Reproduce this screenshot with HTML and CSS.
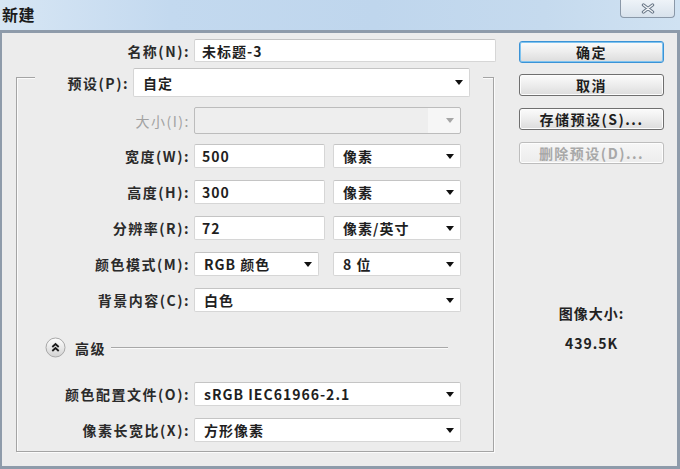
FILE: index.html
```html
<!DOCTYPE html>
<html lang="zh-CN">
<head>
<meta charset="utf-8">
<title>新建</title>
<link rel="stylesheet" href="styles.css">
</head>
<body>
<div class="window">
  <div class="titlebar">
    <span class="title">新建</span>
    <button class="close" aria-label="关闭">
      <svg width="14" height="11" viewBox="0 0 14 11">
        <path d="M2.5 2 L11.5 9 M11.5 2 L2.5 9" stroke="#6a7888" stroke-width="3.4" stroke-linecap="round"/>
        <path d="M2.5 2 L11.5 9 M11.5 2 L2.5 9" stroke="#f2f5f8" stroke-width="1.3" stroke-linecap="round"/>
      </svg>
    </button>
  </div>
  <div class="frame">
    <div class="form">
      <div class="row name-row">
        <label class="lbl lbl-out">名称(N):</label>
        <div class="field w-name">未标题-3</div>
      </div>

      <div class="group">
        <div class="row preset-row">
          <label class="lbl lbl-preset">预设(P):</label>
          <div class="field select w-preset"><span>自定</span><i class="arrow"></i></div>
        </div>

        <div class="row size-row">
          <label class="lbl lbl-in disabled">大小(I):</label>
          <div class="field select disabled-field w-full"><span></span><i class="arrow"></i></div>
        </div>

        <div class="row std-row first-std">
          <label class="lbl lbl-in">宽度(W):</label>
          <div class="field w-num">500</div>
          <div class="field select w-unit"><span>像素</span><i class="arrow"></i></div>
        </div>

        <div class="row std-row">
          <label class="lbl lbl-in">高度(H):</label>
          <div class="field w-num">300</div>
          <div class="field select w-unit"><span>像素</span><i class="arrow"></i></div>
        </div>

        <div class="row std-row">
          <label class="lbl lbl-in">分辨率(R):</label>
          <div class="field w-num">72</div>
          <div class="field select w-unit"><span>像素/英寸</span><i class="arrow"></i></div>
        </div>

        <div class="row std-row">
          <label class="lbl lbl-in">颜色模式(M):</label>
          <div class="field select w-mode"><span>RGB 颜色</span><i class="arrow"></i></div>
          <div class="field select w-bit"><span>8 位</span><i class="arrow"></i></div>
        </div>

        <div class="row std-row">
          <label class="lbl lbl-in">背景内容(C):</label>
          <div class="field select w-full"><span>白色</span><i class="arrow"></i></div>
        </div>

        <div class="row adv-row">
          <svg class="adv-icon" width="21" height="21" viewBox="0 0 21 21">
            <defs>
              <linearGradient id="advg" x1="0" y1="0" x2="0" y2="1">
                <stop offset="0" stop-color="#ffffff"/>
                <stop offset="1" stop-color="#d2d2d2"/>
              </linearGradient>
            </defs>
            <circle cx="10.5" cy="10.5" r="9.5" fill="url(#advg)" stroke="#a8a8a8"/>
            <path d="M7.3 10 L10.5 7 L13.7 10 M7.3 14 L10.5 11 L13.7 14" fill="none" stroke="#1c1c1c" stroke-width="1.8"/>
          </svg>
          <span class="adv-text">高级</span>
          <span class="adv-line"></span>
        </div>

        <div class="row std-row profile-row">
          <label class="lbl lbl-in">颜色配置文件(O):</label>
          <div class="field select w-full"><span>sRGB IEC61966-2.1</span><i class="arrow"></i></div>
        </div>

        <div class="row std-row">
          <label class="lbl lbl-in">像素长宽比(X):</label>
          <div class="field select w-full"><span>方形像素</span><i class="arrow"></i></div>
        </div>
      </div>
    </div>

    <div class="side">
      <button class="btn btn-default">确定</button>
      <button class="btn">取消</button>
      <button class="btn">存储预设(S)...</button>
      <button class="btn" disabled>删除预设(D)...</button>
      <div class="info">
        <div class="info-label">图像大小:</div>
        <div class="info-value">439.5K</div>
      </div>
    </div>
  </div>
</div>
</body>
</html>
```

FILE: styles.css
```css
* { box-sizing: border-box; }

html, body {
  margin: 0;
  padding: 0;
}

body {
  width: 680px;
  height: 469px;
  overflow: hidden;
  background: #ececec;
  font-family: "Noto Sans CJK SC", "DejaVu Sans", sans-serif;
  color: #222;
}

.window {
  width: 680px;
  height: 469px;
  display: flex;
  flex-direction: column;
}

/* ---------- title bar ---------- */
.titlebar {
  flex: none;
  height: 30px;
  display: flex;
  justify-content: space-between;
  align-items: flex-start;
  background: linear-gradient(to right, #d7e6f4 0%, #c3d9ef 25%, #bfd6ed 55%, #c5daee 80%, #d0e2f2 100%);
}

.title {
  margin: 3px 0 0 2px;
  font-size: 16px;
  font-weight: 700;
  line-height: 22px;
  letter-spacing: 0.5px;
  color: #1b1b1b;
}

.close {
  width: 55px;
  height: 18px;
  margin-right: 5px;
  padding: 0;
  border: 1px solid #8a98a8;
  border-top: none;
  border-radius: 0 0 4px 4px;
  background: linear-gradient(#eef3f8, #d8e2ec);
  display: flex;
  align-items: center;
  justify-content: center;
}

/* ---------- frame ---------- */
.frame {
  flex: 1;
  display: flex;
  background: #ececec;
  border-style: solid;
  border-color: #8e9baa;
  border-width: 3px 3px 3px 2px;
}

.form {
  flex: none;
  width: 495px;
  padding-top: 6px;
}

.row {
  display: flex;
  align-items: center;
}

.lbl {
  flex: none;
  text-align: right;
  font-size: 14px;
  font-weight: 700;
  letter-spacing: 1.5px;
  color: #2a2a2a;
  white-space: nowrap;
  margin-right: 4px;
}

.lbl.disabled { color: #a2a2a2; font-weight: 400; }

.lbl-out { width: 188px; }
.lbl-in { width: 173px; }
.lbl-preset { width: 94px; }

.field {
  flex: none;
  height: 24px;
  display: flex;
  align-items: center;
  padding: 0 6px 0 7px;
  background: #ffffff;
  border: 1px solid #d6d6d6;
  border-top-color: #c4c4c4;
  border-radius: 2px;
  font-size: 14px;
  font-weight: 700;
  letter-spacing: 1px;
  color: #1f1f1f;
  white-space: nowrap;
}

.select {
  justify-content: space-between;
  padding-left: 9px;
}

.arrow {
  flex: none;
  width: 0;
  height: 0;
  border-left: 4px solid transparent;
  border-right: 4px solid transparent;
  border-top: 5px solid #111;
}

.name-row .field { height: 23px; }
.w-name { width: 302px; }

/* ---------- group box ---------- */
.group {
  width: 478px;
  margin: 15px 0 0 14px;
  padding-bottom: 9px;
  border: 1px solid #a4a4a4;
  box-shadow: inset 1px 1px 0 #fbfbfb, 1px 1px 0 #fbfbfb;
}

.preset-row {
  width: 448px;
  height: 29px;
  margin: -10px 0 0 18px;
  background: #ececec;
}

.w-preset { width: 337px; height: 29px; }

.size-row { margin-top: 10px; }
.size-row .field { height: 27px; }

.disabled-field {
  background: linear-gradient(to right, #eeeeee 0, #eeeeee 88%, #f6f6f6 88%);
  border-color: #bcbcbc;
}
.disabled-field .arrow { border-top-color: #a6a6a6; }

.w-full { width: 267px; }
.w-num { width: 131px; }
.w-unit { width: 128px; margin-left: 8px; }
.w-mode { width: 125px; }
.w-bit { width: 128px; margin-left: 14px; }

.std-row { margin-top: 12px; }
.first-std { margin-top: 10px; }

.adv-row {
  margin: 25px 0 0 28px;
  height: 21px;
}

.adv-icon { flex: none; }

.adv-text {
  margin-left: 9px;
  font-size: 14px;
  font-weight: 700;
  letter-spacing: 1.5px;
  color: #2a2a2a;
}

.adv-line {
  width: 337px;
  height: 2px;
  margin-left: 5px;
  border-top: 1px solid #a8a8a8;
  border-bottom: 1px solid #fafafa;
}

.profile-row { margin-top: 24px; }

/* ---------- side column ---------- */
.side {
  flex: 1;
  padding: 8px 0 0 22px;
  display: flex;
  flex-direction: column;
}

.btn {
  width: 145px;
  height: 22px;
  margin: 0 0 12px 0;
  padding: 0;
  border: 1px solid #6f6f6f;
  border-radius: 3px;
  background: linear-gradient(#fbfbfb 0%, #ededed 50%, #dcdcdc 100%);
  box-shadow: inset 0 0 0 1px #fdfdfd;
  font-family: "Noto Sans CJK SC", "DejaVu Sans", sans-serif;
  font-size: 14px;
  font-weight: 700;
  letter-spacing: 1.5px;
  color: #1e1e1e;
  line-height: 20px;
}

.btn-default {
  margin-bottom: 11px;
  border: 1px solid #3b93d6;
  box-shadow: inset 0 0 0 1px #7fc3ef;
}

.btn:disabled {
  border-color: #bdbdbd;
  color: #a8a8a8;
  background: linear-gradient(#f6f6f6, #ececec);
}

.info {
  width: 145px;
  margin-top: 127px;
  text-align: center;
  font-size: 14px;
  font-weight: 700;
  letter-spacing: 1px;
  line-height: 20px;
  color: #222;
}

.info-value { margin-top: 10px; }
```
